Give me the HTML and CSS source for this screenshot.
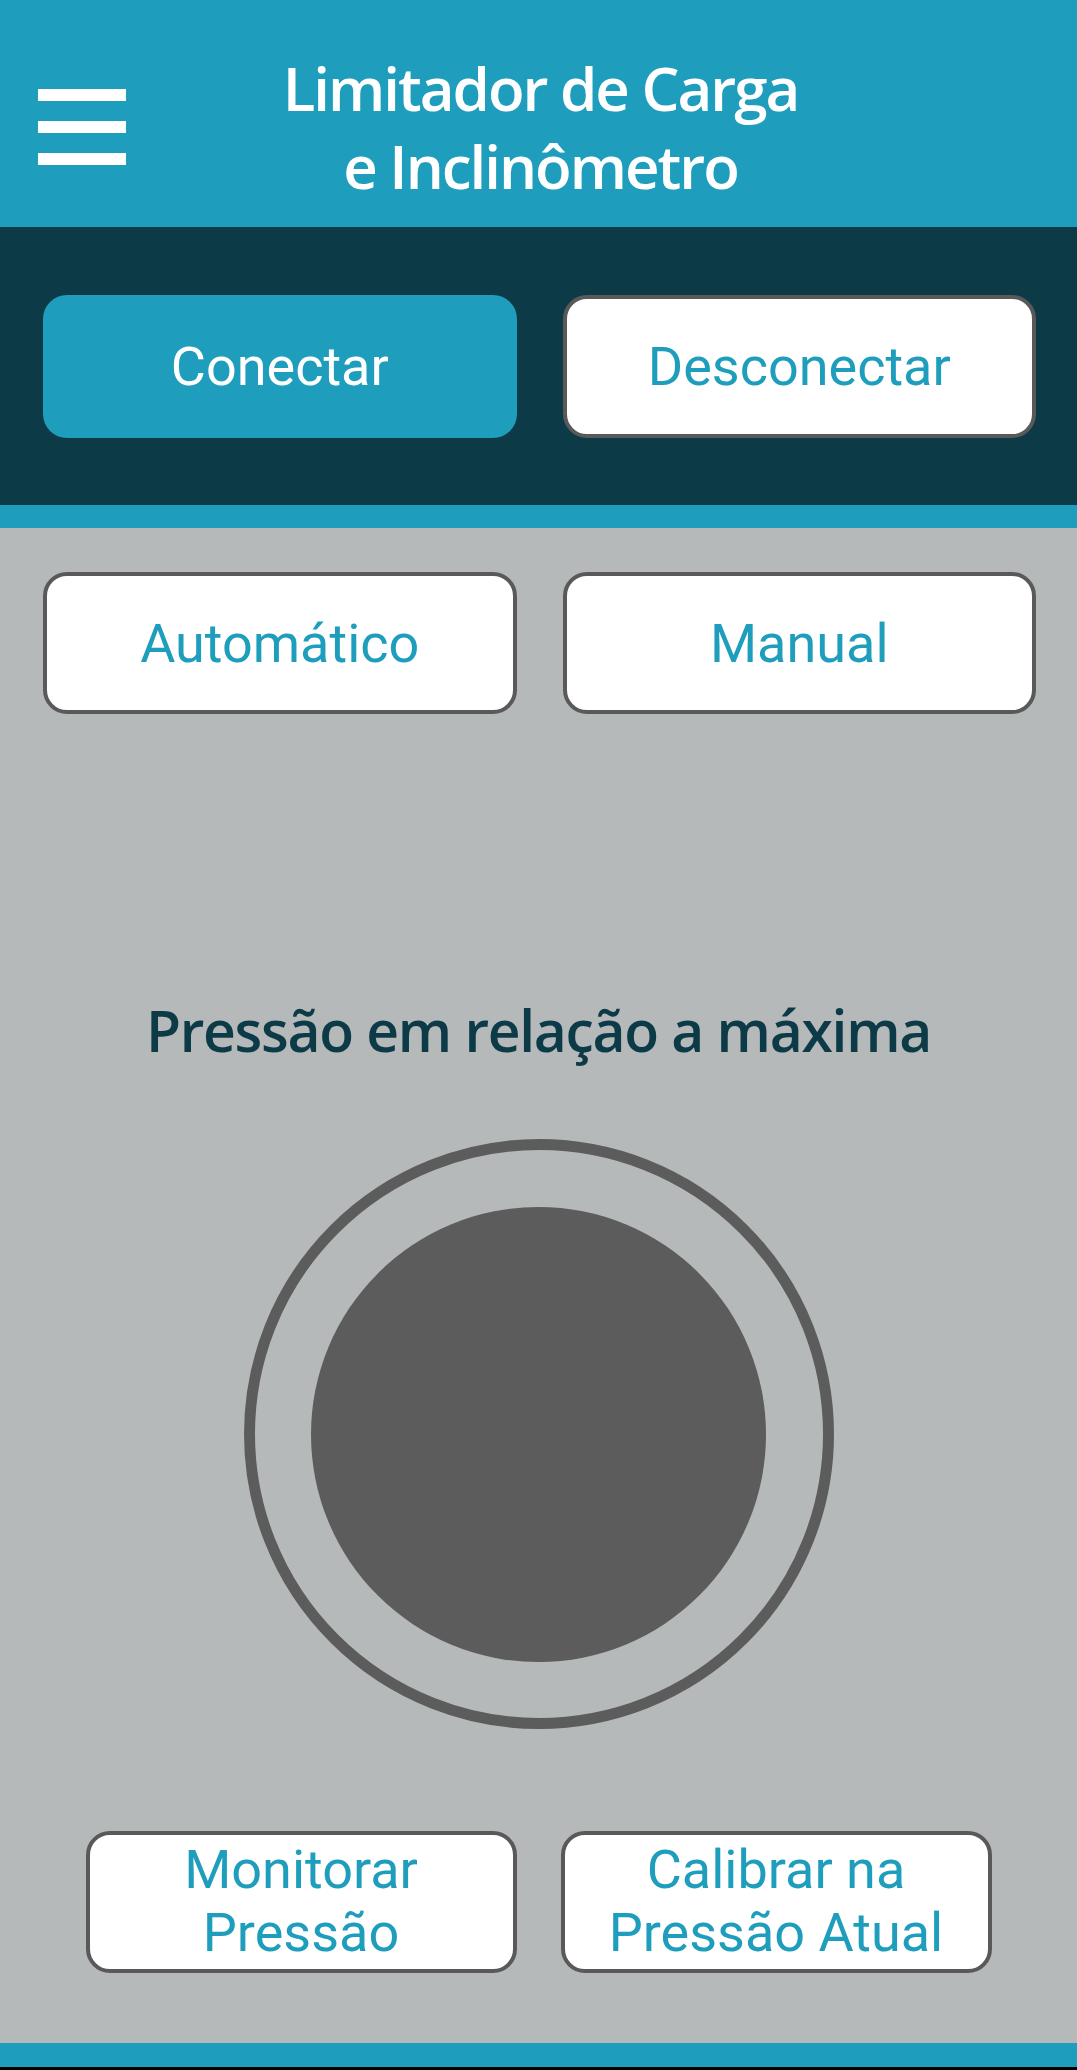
FILE: index.html
```html
<!DOCTYPE html>
<html lang="pt-BR">
<head>
<meta charset="utf-8">
<title>Limitador de Carga e Inclinômetro</title>
<link rel="stylesheet" href="styles.css">
</head>
<body>
<div class="app">
  <header class="topbar">
    <div class="menu" aria-label="Menu">
      <span></span><span></span><span></span>
    </div>
    <h1 class="title">Limitador de Carga<br>e Inclinômetro</h1>
    <div></div>
  </header>

  <section class="connect">
    <button class="btn btn-filled">Conectar</button>
    <button class="btn">Desconectar</button>
  </section>

  <main class="main">
    <div class="row">
      <button class="btn">Automático</button>
      <button class="btn">Manual</button>
    </div>

    <h2 class="heading">Pressão em relação a máxima</h2>

    <div class="gauge">
      <div class="gauge-dot"></div>
    </div>

    <div class="row row-small">
      <button class="btn btn-two">Monitorar<br>Pressão</button>
      <button class="btn btn-two">Calibrar na<br>Pressão Atual</button>
    </div>
  </main>

  <footer class="footer"></footer>
</div>
</body>
</html>
```

FILE: styles.css
```css
* { box-sizing: border-box; }

html, body {
  margin: 0;
  padding: 0;
}

body {
  background: #b6b9ba;
  font-family: "Roboto", "Liberation Sans", sans-serif;
}

.app {
  width: 1077px;
  height: 2070px;
  display: flex;
  flex-direction: column;
  background: #b6b9ba;
}

.topbar {
  height: 227px;
  padding-top: 27px;
  background: #1e9ebc;
  display: grid;
  grid-template-columns: 1fr auto 1fr;
  align-items: center;
}

.menu {
  margin-left: 38px;
  display: flex;
  flex-direction: column;
  gap: 20px;
  width: 88px;
}

.menu span {
  display: block;
  height: 12px;
  background: #ffffff;
}

.title {
  margin: 0 0 0 4px;
  font-family: "Open Sans", "Noto Sans", sans-serif;
  font-weight: 600;
  font-size: 60px;
  line-height: 78px;
  color: #ffffff;
  text-align: center;
  letter-spacing: -2px;
}

.connect {
  height: 301px;
  background: #0d3a47;
  border-bottom: 23px solid #1e9ebc;
  padding: 68px 41px 0 43px;
  display: grid;
  grid-template-columns: 1fr 1fr;
  column-gap: 46px;
  align-items: start;
}

.btn {
  height: 143px;
  margin: 0;
  padding: 0;
  background: #ffffff;
  border: 4px solid #595959;
  border-radius: 24px;
  font-family: "Roboto", "Liberation Sans", sans-serif;
  font-weight: 400;
  font-size: 54px;
  color: #1e9ebc;
  display: flex;
  align-items: center;
  justify-content: center;
  text-align: center;
}

.btn-filled {
  background: #1e9ebc;
  border: none;
  color: #ffffff;
}

.main {
  flex: 1;
  padding-top: 44px;
  display: flex;
  flex-direction: column;
  align-items: stretch;
}

.row {
  padding: 0 41px 0 43px;
  display: grid;
  grid-template-columns: 1fr 1fr;
  column-gap: 46px;
}

.row .btn {
  height: 142px;
}

.heading {
  margin: 281px 0 0;
  font-family: "Open Sans", "Noto Sans", sans-serif;
  font-weight: 600;
  font-size: 57px;
  line-height: 70px;
  color: #0d3a47;
  text-align: center;
  letter-spacing: -1.3px;
}

.gauge {
  align-self: center;
  margin-top: 74px;
  width: 590px;
  height: 590px;
  border: 11px solid #5c5c5c;
  border-radius: 50%;
  display: flex;
  align-items: center;
  justify-content: center;
}

.gauge-dot {
  width: 455px;
  height: 455px;
  border-radius: 50%;
  background: #5c5c5c;
}

.row-small {
  margin-top: 102px;
  padding: 0;
  grid-template-columns: 431px 431px;
  column-gap: 44px;
  justify-content: center;
}

.btn-two {
  line-height: 63px;
  padding-bottom: 2px;
}

.footer {
  height: 27px;
  border-top: 24px solid #1e9ebc;
  background: #000000;
}
```
